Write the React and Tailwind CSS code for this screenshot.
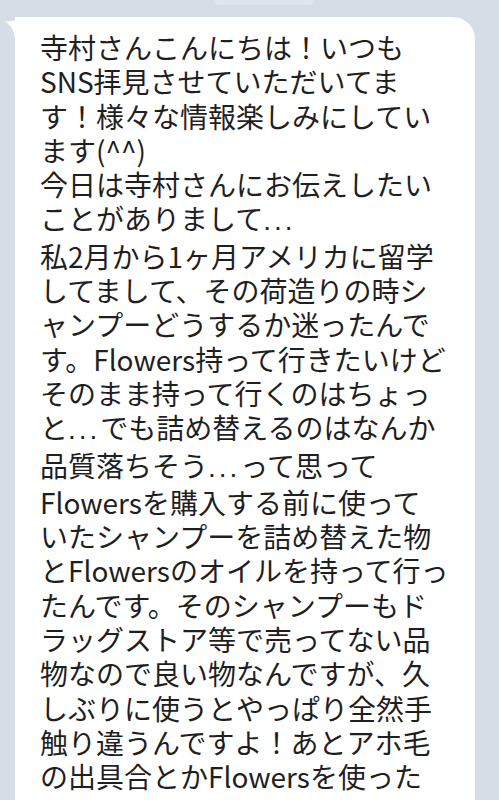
import React from "react";

const lines = [
  "寺村さんこんにちは！いつも",
  "SNS拝見させていただいてま",
  "す！様々な情報楽しみにしてい",
  "ます(^^)",
  "今日は寺村さんにお伝えしたい",
  ["ことがありまして", "..."],
  "私2月から1ヶ月アメリカに留学",
  "してまして、その荷造りの時シ",
  "ャンプーどうするか迷ったんで",
  "す。Flowers持って行きたいけど",
  "そのまま持って行くのはちょっ",
  ["と", "...", "でも詰め替えるのはなんか"],
  ["品質落ちそう", "...", "って思って"],
  "Flowersを購入する前に使って",
  "いたシャンプーを詰め替えた物",
  "とFlowersのオイルを持って行っ",
  "たんです。そのシャンプーもド",
  "ラッグストア等で売ってない品",
  "物なので良い物なんですが、久",
  "しぶりに使うとやっぱり全然手",
  "触り違うんですよ！あとアホ毛",
  "の出具合とかFlowersを使った",
];

function Line({ content }) {
  if (typeof content === "string") return <div className="whitespace-nowrap">{content}</div>;
  return (
    <div className="whitespace-nowrap">
      {content.map((part, i) =>
        part === "..." ? (
          <span key={i} className="tracking-[3px] font-['Liberation_Sans',sans-serif]">
            ...
          </span>
        ) : (
          <span key={i}>{part}</span>
        )
      )}
    </div>
  );
}

export default function App() {
  return (
    <div className="w-[499px] h-[800px] overflow-hidden bg-[#d6dde7] font-['Noto_Sans_CJK_JP','Noto_Sans_CJK_SC',sans-serif]">
      <div className="ml-[215px] w-[98px] h-[5px] rounded-b-[4px] bg-[#dfe5ed]" />
      <div className="relative ml-[15px] mt-[12px] w-[460px] rounded-[22px] rounded-tl-[0px] bg-white pl-[25px] pt-[13px] pb-[60px] text-[28px] leading-[34.3px] text-[#1f1f1f]">
        <svg
          className="absolute left-[-11px] top-0"
          width="30"
          height="30"
          viewBox="0 0 30 30"
        >
          <path d="M0 4 C 8 5 15 3 21 0 L 30 0 L 30 30 L 11 30 L 11 21 C 10 13 6 7 0 4 Z" fill="#ffffff" />
        </svg>
        {lines.map((l, i) => (
          <Line key={i} content={l} />
        ))}
      </div>
    </div>
  );
}
